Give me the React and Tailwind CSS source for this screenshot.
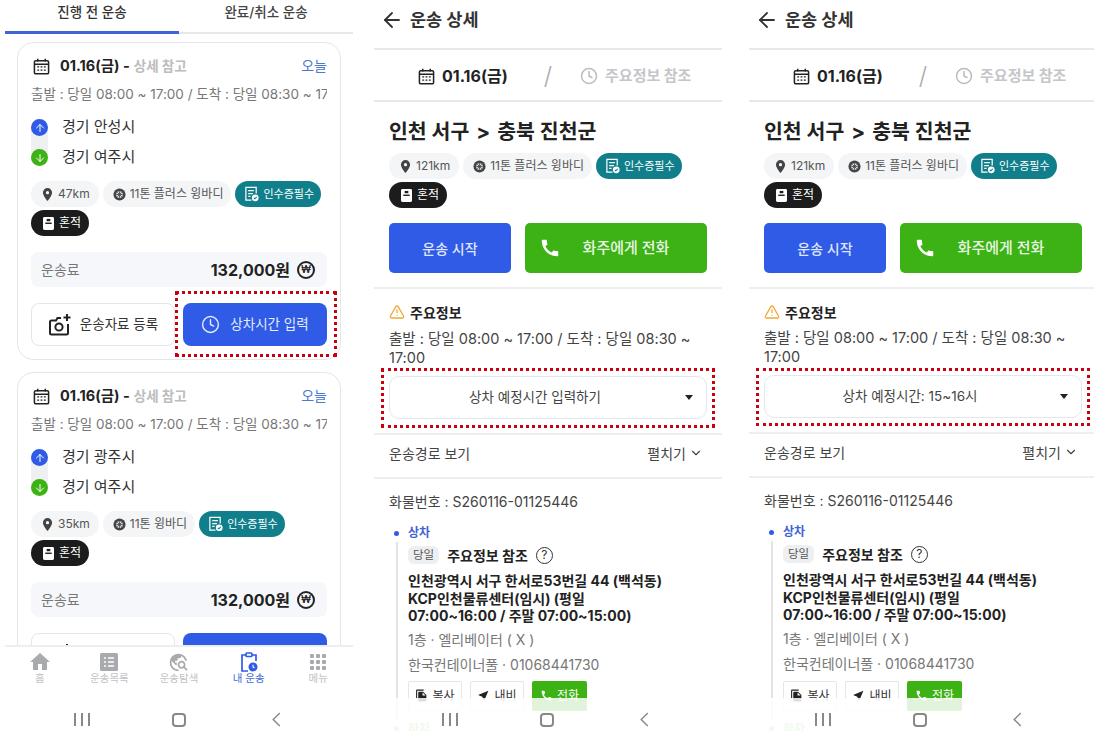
import { ArrowDown, ArrowLeft, ArrowUp, ChevronDown, Clock, TriangleAlert } from 'lucide-react';
import { MdCall, MdFileCopy, MdHome, MdNearMe, MdTravelExplore } from 'react-icons/md';

const font = { fontFamily: 'Inter, "Noto Sans CJK KR", sans-serif' };

function CalendarIcon({ className }) {
  return (
    <svg viewBox="0 0 18 18" className={className} fill="none" stroke="#222" strokeWidth="1.6">
      <rect x="1.5" y="2.8" width="15" height="14" rx="1.5" />
      <path d="M1.5 6.6h15M5 .8v3M13 .8v3" />
      <path d="M4.5 9.4h2M8 9.4h2M11.5 9.4h2M4.5 12.8h2M8 12.8h2M11.5 12.8h2" strokeWidth="1.5" />
    </svg>
  );
}

function PinIcon() {
  return (
    <svg viewBox="0 0 12 14" className="w-[11px] h-[13px]">
      <path fillRule="evenodd" fill="#444" d="M6 0a5 5 0 0 1 5 5c0 3.4-5 9-5 9S1 8.4 1 5a5 5 0 0 1 5-5zm0 3.2a1.8 1.8 0 1 0 0 3.6 1.8 1.8 0 0 0 0-3.6z" />
    </svg>
  );
}

function TireIcon() {
  return (
    <svg viewBox="0 0 14 14" className="w-[13px] h-[13px]">
      <circle cx="7" cy="7" r="6.5" fill="#444" />
      <circle cx="7" cy="7" r="3.6" fill="#ddd" />
      <path d="M7 3.6v6.8M3.6 7h6.8M4.6 4.6l4.8 4.8M9.4 4.6l-4.8 4.8" stroke="#444" strokeWidth="0.9" />
    </svg>
  );
}

function DocCheckIcon() {
  return (
    <svg viewBox="0 0 16 17" className="w-[15px] h-[16px]" fill="none" stroke="#fff" strokeWidth="1.3">
      <path d="M8 15H2V1.5h11V8" />
      <path d="M4.5 5h6M4.5 8h5M4.5 11h2.5" />
      <circle cx="12" cy="12.5" r="3.6" fill="#fff" stroke="none" />
      <path d="M10.4 12.5l1.2 1.2 2-2.2" stroke="#117f8b" strokeWidth="1.1" />
    </svg>
  );
}

function MixedIcon() {
  return (
    <svg viewBox="0 0 12 14" className="w-[11px] h-[13px]">
      <path fill="#fff" d="M1.5 0h9A1.5 1.5 0 0 1 12 1.5v11a1.5 1.5 0 0 1-1.5 1.5h-9A1.5 1.5 0 0 1 0 12.500v-11A1.5 1.5 0 0 1 1.500 0z" />
      <rect x="2.500" y="6" width="7" height="1.500" fill="#1c1c1c" />
      <rect x="4" y="2" width="4" height="2.500" fill="#1c1c1c" />
    </svg>
  );
}

function CameraPlusIcon() {
  return (
    <svg viewBox="0 0 24 24" className="w-[24px] h-[24px]" fill="none" stroke="#222" strokeWidth="2">
      <path d="M13 5H9.500L8 7.500H3.500a1.500 1.500 0 0 0-1.500 1.500v11a1.500 1.500 0 0 0 1.500 1.500h15a1.500 1.500 0 0 0 1.500-1.500V11" />
      <circle cx="11" cy="14" r="3.600" />
      <path d="M19 1v7M15.500 4.500h7" />
    </svg>
  );
}

function Chips({ distance, truck }) {
  return (
    <div className="flex flex-wrap gap-x-[4px] gap-y-[3px]">
      <span className="h-[26px] pl-[11px] pr-[9px] rounded-full bg-[#f3f5f7] text-[#555] flex items-center gap-[5px] text-[12px] whitespace-nowrap"><PinIcon />{distance}</span>
      <span className="h-[26px] pl-[10px] pr-[8px] rounded-full bg-[#f3f5f7] text-[#555] flex items-center gap-[4px] text-[12px] whitespace-nowrap"><TireIcon />{truck}</span>
      <span className="h-[26px] pl-[9px] pr-[7px] rounded-full bg-[#117f8b] text-white flex items-center gap-[4px] text-[11px] whitespace-nowrap"><DocCheckIcon />인수증필수</span>
      <span className="h-[26px] pl-[12px] pr-[8px] rounded-full bg-[#1c1c1c] text-white flex items-center gap-[5px] text-[12px] whitespace-nowrap"><MixedIcon />혼적</span>
    </div>
  );
}

function RoutePoints({ from, to }) {
  return (
    <div className="relative mt-[15px] h-[47px]">
      <div className="absolute left-0 top-[8px] bottom-[8px] w-[17px] bg-[#eef0f2]" />
      <div className="relative flex items-center h-[17px]">
        <span className="w-[17px] h-[17px] rounded-full bg-[#2f5be7] flex items-center justify-center">
          <ArrowUp size={12} color="#fff" strokeWidth={2} />
        </span>
        <span className="ml-[14px] text-[15px] text-[#333]">{from}</span>
      </div>
      <div className="relative flex items-center h-[17px] mt-[13px]">
        <span className="w-[17px] h-[17px] rounded-full bg-[#3cb214] flex items-center justify-center">
          <ArrowDown size={12} color="#fff" strokeWidth={2} />
        </span>
        <span className="ml-[14px] text-[15px] text-[#333]">{to}</span>
      </div>
    </div>
  );
}

function OrderCard({ from, to, distance, truck, highlight }) {
  return (
    <div className="relative border border-[#e4e6e9] rounded-[16px] px-[13px] pt-[13px] pb-[13px] mb-[12px] bg-white">
      <div className="flex items-center justify-between h-[20px]">
        <div className="flex items-center">
          <CalendarIcon className="w-[17px] h-[17px] ml-[2px]" />
          <span className="ml-[10px] text-[14.500px] font-bold text-[#222]">01.16(금) -</span>
          <span className="ml-[4px] text-[13.500px] font-bold text-[#bbbdc0]">상세 참고</span>
        </div>
        <span className="-mt-[2px] text-[14px] text-[#4a78d4]">오늘</span>
      </div>
      <div className="mt-[8px] h-[20px] overflow-hidden whitespace-nowrap text-[13.500px] leading-[20px] text-[#777]">
        출발 : 당일 08:00 ~ 17:00 / 도착 : 당일 08:30 ~ 17:00
      </div>
      <RoutePoints from={from} to={to} />
      <div className="mt-[15px]">
        <Chips distance={distance} truck={truck} />
      </div>
      <div className="mt-[16px] h-[35px] rounded-[8px] bg-[#f5f7fa] flex items-center justify-between pl-[10px] pr-[12px]">
        <span className="text-[14px] text-[#777]">운송료</span>
        <div className="flex items-center gap-[7px]">
          <span className="text-[16px] font-bold text-[#222]">132,000원</span>
          <span className="w-[18px] h-[18px] rounded-full border-2 border-[#222] flex items-center justify-center text-[10px] font-semibold text-[#222]">₩</span>
        </div>
      </div>
      <div className="mt-[16px] flex gap-[8px]">
        <button className="w-[144px] h-[43px] border border-[#e4e6e9] rounded-[8px] flex items-center justify-center gap-[8px] text-[13.500px] text-[#333]">
          <CameraPlusIcon />운송자료 등록
        </button>
        <button className="w-[144px] h-[43px] rounded-[8px] bg-[#2f5be7] flex items-center justify-center gap-[10px] text-[13.500px] text-[#e6ebfb]">
          <Clock size={19} strokeWidth={1.800} />상차시간 입력
        </button>
      </div>
      {highlight && <div className="absolute left-[157px] top-[248px] w-[162px] h-[66px] border-[3px] border-dotted border-[#c8000f]" />}
    </div>
  );
}

function BottomNav() {
  const items = [
    { label: '홈', icon: <MdHome size={24} color="#a8aaad" /> },
    {
      label: '운송목록',
      icon: (
        <svg viewBox="0 0 18 18" className="w-[18px] h-[18px]">
          <rect width="18" height="18" rx="1.500" fill="#a8aaad" />
          <path d="M4 5h2M8 5h6M4 9h2M8 9h6M4 13h2M8 13h6" stroke="#fff" strokeWidth="1.500" />
        </svg>
      ),
    },
    { label: '운송탐색', icon: <MdTravelExplore size={21} color="#a8aaad" /> },
    {
      label: '내 운송',
      active: true,
      icon: (
        <svg viewBox="0 0 18 20" className="w-[18px] h-[20px]" fill="none" stroke="#2f5be7" strokeWidth="1.700">
          <path d="M6 3H2v16h6M12 3h4v6" />
          <rect x="6" y="1" width="6" height="3.500" rx="1" />
          <circle cx="13" cy="15" r="4.500" fill="#2f5be7" stroke="none" />
          <path d="M13 12.800V15l1.500 1" stroke="#fff" strokeWidth="1.100" />
        </svg>
      ),
    },
    {
      label: '메뉴',
      icon: (
        <svg viewBox="0 0 16 16" className="w-[16px] h-[16px]" fill="#a8aaad">
          <rect width="4" height="4" rx="1" /><rect x="6" width="4" height="4" rx="1" /><rect x="12" width="4" height="4" rx="1" />
          <rect y="6" width="4" height="4" rx="1" /><rect x="6" y="6" width="4" height="4" rx="1" /><rect x="12" y="6" width="4" height="4" rx="1" />
          <rect y="12" width="4" height="4" rx="1" /><rect x="6" y="12" width="4" height="4" rx="1" /><rect x="12" y="12" width="4" height="4" rx="1" />
        </svg>
      ),
    },
  ];
  return (
    <nav className="h-[55px] shrink-0 border-t-2 border-[#eceef0] bg-white grid grid-cols-5">
      {items.map((it) => (
        <div key={it.label} className="flex flex-col items-center pt-[4px]">
          <div className="h-[22px] flex items-center justify-center">{it.icon}</div>
          <span className={`text-[10.500px] leading-[12px] ${it.active ? 'text-[#3f68d8]' : 'text-[#c0c2c5]'}`}>{it.label}</span>
        </div>
      ))}
    </nav>
  );
}

function AndroidBar({ className }) {
  return (
    <div className={`h-full flex items-center justify-center ${className}`}>
      <div className="w-[97px] flex justify-center gap-[5px]">
        <span className="w-[2px] h-[13px] bg-[#888]" />
        <span className="w-[2px] h-[13px] bg-[#888]" />
        <span className="w-[2px] h-[13px] bg-[#888]" />
      </div>
      <div className="w-[97px] flex justify-center">
        <span className="w-[14px] h-[14px] rounded-[4px] border-2 border-[#888]" />
      </div>
      <div className="w-[97px] flex justify-center">
        <svg viewBox="0 0 10 16" className="w-[10px] h-[15px]" fill="none" stroke="#888" strokeWidth="1.500"><path d="M9 1L2 8l7 7" /></svg>
      </div>
    </div>
  );
}

function ListPhone() {
  return (
    <div className="w-[348px] ml-[5px] h-[731px] flex flex-col shrink-0">
      <div className="h-[34px] flex shrink-0 border-b-2 border-[#e6e8ea]">
        <div className="w-[174px] h-[34px] border-b-[3px] border-[#3f63d8] flex justify-center pt-[2px] text-[13.500px] font-medium text-[#333]">진행 전 운송</div>
        <div className="flex-1 flex justify-center pt-[2px] text-[13.500px] font-medium text-[#444]">완료/취소 운송</div>
      </div>
      <div className="flex-1 overflow-hidden px-[12px] pt-[8px]">
        <OrderCard from="경기 안성시" to="경기 여주시" distance="47km" truck="11톤 플러스 윙바디" highlight />
        <OrderCard from="경기 광주시" to="경기 여주시" distance="35km" truck="11톤 윙바디" />
      </div>
      <BottomNav />
      <div className="h-[31px] shrink-0 bg-white"><AndroidBar className="pt-[8px]" /></div>
    </div>
  );
}

function DetailPhone({ selectText, widthClass, marginClass, boxClass, tight }) {
  return (
    <div className={`relative h-[731px] shrink-0 overflow-hidden bg-white ${widthClass} ${marginClass}`}>
      <header className="h-[50px] border-b-2 border-[#e6e8ea] flex items-center pl-[6px] pb-[8px]">
        <ArrowLeft size={24} color="#333" strokeWidth={1.800} />
        <h1 className="ml-[6px] text-[17.500px] font-bold text-[#333]">운송 상세</h1>
      </header>
      <div className="h-[52px] border-b-2 border-[#e6e8ea] flex items-center pl-[44px] pt-[2px]">
        <CalendarIcon className="w-[17px] h-[17px]" />
        <span className="ml-[7px] text-[16px] font-bold text-[#222]">01.16(금)</span>
        <span className="ml-[36px] text-[24px] text-[#aaa] font-light">/</span>
        <Clock size={18} color="#bbb" className="ml-[28px]" />
        <span className="ml-[7px] text-[15px] font-bold text-[#c4c6c9]">주요정보 참조</span>
      </div>

      <section className="px-[15px] pt-[15px] pb-[14px] border-b-2 border-[#eceef0]">
        <h2 className="h-[30px] flex items-center text-[20.500px] font-bold text-[#222] whitespace-nowrap">
          인천 서구<span className="mx-[7px]">&gt;</span>충북 진천군
        </h2>
        <div className="mt-[6px] w-[318px]">
          <Chips distance="121km" truck="11톤 플러스 윙바디" />
        </div>
        <div className="mt-[15px] flex gap-[14px] w-[318px]">
          <button className="w-[122px] h-[50px] rounded-[5px] bg-[#2f5be7] text-[14px] font-medium text-[#dfe6fb]">운송 시작</button>
          <button className="relative flex-1 h-[50px] rounded-[5px] bg-[#3cb214] text-[15px] font-medium text-[#eaf7e4] pl-[20px]">
            <MdCall size={22} color="#fff" className="absolute left-[14px] top-[14px]" />
            화주에게 전화
          </button>
        </div>
      </section>

      <section className="px-[15px] pt-[14px] pb-[14px] border-b-2 border-[#eceef0]">
        <div className="h-[18px] flex items-center gap-[5px] text-[14px] font-bold text-[#222]">
          <TriangleAlert size={16} color="#f0a93a" strokeWidth={2} />주요정보
        </div>
        <p className={`${tight ? 'mt-[7px]' : 'mt-[8px]'} w-[318px] text-[14.500px] leading-[19px] text-[#444]`}>출발 : 당일 08:00 ~ 17:00 / 도착 : 당일 08:30 ~ 17:00</p>
        <div className="relative mt-[9px] w-[318px] h-[43px] pr-[26px] rounded-[10px] border border-[#e4e6e9] flex items-center justify-center text-[13.500px] text-[#444]">
          {selectText}
          <svg viewBox="0 0 8 5" className="absolute right-[13px] top-[18px] w-[8px] h-[5px]"><path d="M0 0h8L4 5z" fill="#222" /></svg>
        </div>
      </section>

      <div className="h-[44px] px-[15px] pb-[6px] border-b-2 border-[#eceef0] flex items-center">
        <div className="w-[314px] flex items-center justify-between text-[14px] text-[#444]">
          <span>운송경로 보기</span>
          <span className="flex items-center">펼치기<ChevronDown size={14} className="ml-[3px]" /></span>
        </div>
      </div>

      <section className="px-[15px] pt-[13px]">
        <p className="h-[20px] text-[14px] leading-[20px] text-[#444]">화물번호 : S260116-01125446</p>
        <div className="mt-[12px] h-[18px] flex items-center text-[12px] font-bold text-[#3f63d8]">
          <span className="ml-[5px] w-[5px] h-[5px] rounded-full bg-[#2f5be7]" />
          <span className="ml-[9px]">상차</span>
        </div>
        <div className="ml-[7px] pl-[10px] border-l-2 border-[#e2e4e7] w-[318px] pb-[9px]">
          <div className="pt-[4px] flex items-center h-[22px]">
            <span className="h-[18px] px-[5px] rounded-[6px] bg-[#eeeff1] text-[11.500px] leading-[18px] text-[#555]">당일</span>
            <span className="ml-[8px] text-[14px] font-bold text-[#222]">주요정보 참조</span>
            <span className="ml-[8px] w-[17px] h-[17px] rounded-full border-[1.500px] border-[#333] flex items-center justify-center text-[12px] text-[#333]">?</span>
          </div>
          <p className="mt-[8px] text-[14px] leading-[17.500px] font-bold text-[#222]">
            인천광역시 서구 한서로53번길 44 (백석동)<br />KCP인천물류센터(임시) (평일<br />07:00~16:00 / 주말 07:00~15:00)
          </p>
          <p className="mt-[5px] h-[20px] text-[14px] leading-[20px] text-[#777]">1층 · 엘리베이터 ( X )</p>
          <p className="mt-[5px] h-[20px] text-[14px] leading-[20px] text-[#777]">한국컨테이너풀 · 01068441730</p>
          <div className={`${tight ? 'mt-[7px]' : 'mt-[6px]'} flex gap-[8px] text-[12px]`}>
            <span className="w-[54px] h-[30px] border border-[#e4e6e9] rounded-[2px] flex items-center justify-center gap-[4px] text-[#333]"><MdFileCopy size={13} color="#222" />복사</span>
            <span className="w-[54px] h-[30px] border border-[#e4e6e9] rounded-[2px] flex items-center justify-center gap-[4px] text-[#333]"><MdNearMe size={13} color="#222" />내비</span>
            <span className="w-[55px] h-[30px] rounded-[2px] bg-[#3cb214] flex items-center justify-center gap-[4px] text-white"><MdCall size={13} color="#fff" />전화</span>
          </div>
        </div>
        <div className="h-[18px] flex items-center text-[12px] font-bold text-[#9ed98a]">
          <span className="ml-[5px] w-[5px] h-[5px] rounded-full bg-[#9ed98a]" />
          <span className="ml-[9px]">하차</span>
        </div>
      </section>

      <div className="absolute left-0 right-0 bottom-0 h-[33px] bg-white/85"><AndroidBar className="pt-[10px] pr-[3px]" /></div>
      <div className={`absolute border-[3px] border-dotted border-[#c8000f] ${boxClass}`} />
    </div>
  );
}

export default function App() {
  return (
    <div className="w-[1094px] h-[731px] overflow-hidden flex bg-white" style={font}>
      <ListPhone />
      <DetailPhone selectText="상차 예정시간 입력하기" widthClass="w-[348px]" marginClass="ml-[21px]" boxClass="left-[7px] top-[368px] w-[334px] h-[60px]" />
      <DetailPhone selectText="상차 예정시간: 15~16시" widthClass="w-[345px]" marginClass="ml-[27px]" boxClass="left-[7px] top-[368px] w-[334px] h-[58px]" tight />
    </div>
  );
}
